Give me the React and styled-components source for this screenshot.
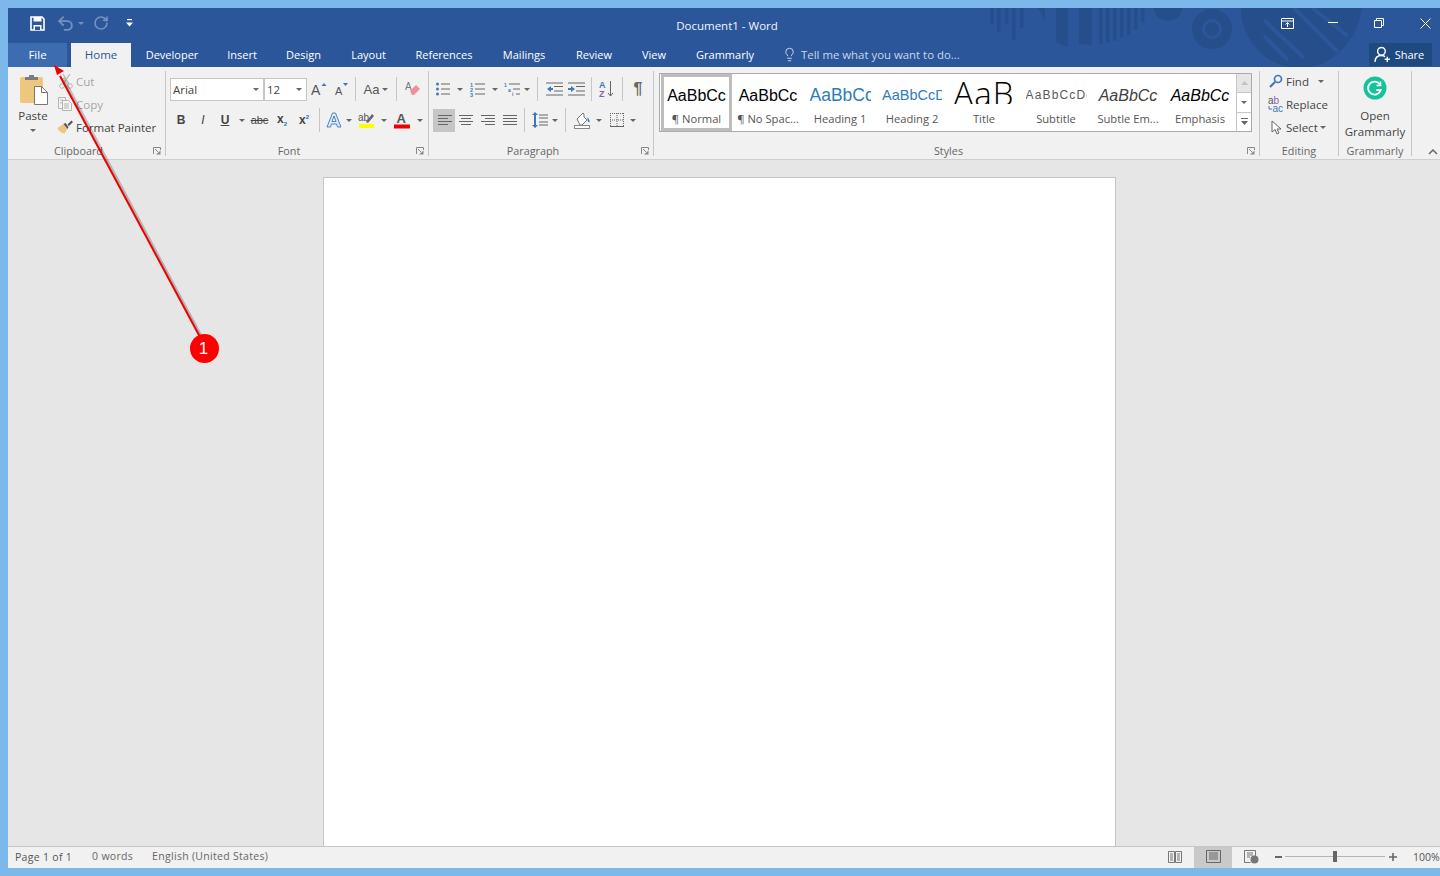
import React from 'react';
import styled, { createGlobalStyle } from 'styled-components';
import { Undo2, RotateCw, Lightbulb } from 'lucide-react';

const Global = createGlobalStyle`
  html, body { margin: 0; padding: 0; height: 876px; overflow: hidden; background: #7cb8ea; }
  * { box-sizing: border-box; }
`;
const UI = '"Open Sans", "Noto Sans", sans-serif';
const Page = styled.div`
  position: relative; width: 1440px; height: 876px; padding: 8px 0 8px 8px;
  background: #7cb8ea; font-family: ${UI}; font-size: 11.5px; color: #444; overflow: hidden;
`;
const Window = styled.div`display: flex; flex-direction: column; height: 860px; background: #e6e6e6;`;
const Head = styled.div`position: relative; background: #2b579a; flex: none;`;
const Art = styled.svg`position: absolute; left: 0; top: 0; display: block;`;
const TitleBar = styled.div`
  position: relative; display: grid; grid-template-columns: 1fr auto 1fr; align-items: start; height: 35px; color: #fff;
`;
const Qat = styled.div`display: flex; align-items: center; padding-left: 18px; height: 30px;`;
const QatBtn = styled.div`
  width: ${p => p.$w}px; height: 22px; display: flex; align-items: center; justify-content: center;
  margin-left: ${p => p.$ml || 0}px; opacity: ${p => p.$dim ? 0.35 : 1}; color: #fff;
`;
const Title = styled.div`font-size: 11.5px; line-height: 35px; padding-left: 6px; color: #f2f5fa;`;
const Controls = styled.div`display: flex; justify-content: flex-end; height: 30px;`;
const Ctrl = styled.div`
  width: ${p => p.$last ? 38 : 46}px; padding-left: ${p => p.$last ? 8 : 0}px;
  display: flex; align-items: center; justify-content: center;
`;
const TabRow = styled.div`position: relative; display: flex; height: 24px; align-items: stretch;`;
const Tab = styled.div`
  width: ${p => p.$w}px; flex: none; display: flex; align-items: center; justify-content: center; padding-bottom: 2px;
  color: #fff; font-size: 11px; margin-left: ${p => p.$ml || 0}px;
  ${p => p.$file && 'background:#3d6cb1;font-size:11.5px;'}
  ${p => p.$active && 'background:#f1f1f1;color:#2b579a;font-size:11.5px;'}
`;
const Tell = styled.div`display: flex; align-items: center; gap: 4px; margin-left: 13px; padding-bottom: 2px; color: #c9d6e8; font-size: 11.4px;`;
const Share = styled.div`
  margin-left: auto; margin-right: 8px; width: 63px; height: 23px; background: #1e4a7f; color: #fff;
  display: flex; align-items: center; justify-content: center; gap: 4px; font-size: 11px; padding-right: 3px;
`;
const Ribbon = styled.div`
  flex: none; display: flex; height: 93px; padding: 4px 0 3px; background: #f1f1f1; border-bottom: 1px solid #cfcfcf;
`;
const Group = styled.div`
  width: ${p => p.$w}px; flex: none; display: flex; flex-direction: column; border-right: 1px solid #c6c6c6;
`;
const GroupBody = styled.div`
  flex: 1; display: flex; min-height: 0; padding: ${p => p.$pt ?? 0}px 0 0 ${p => p.$pl ?? 0}px;
  flex-direction: ${p => p.$col ? 'column' : 'row'}; gap: ${p => p.$gap || 0}px;
`;
const GroupFoot = styled.div`display: flex; align-items: center; height: 14px; margin-bottom: -2px; flex: none;`;
const GroupLabel = styled.div`flex: 1; text-align: center; color: #666; font-size: 10.8px; line-height: 14px;`;
const Launcher = styled.div`width: 16px; flex: none; display: flex; justify-content: center;`;
const PasteCol = styled.div`width: 50px; flex: none; display: flex; flex-direction: column; align-items: center; padding-top: 3px;`;
const PasteText = styled.div`margin-top: 3px; line-height: 16px;`;
const SmallCol = styled.div`display: flex; flex-direction: column; gap: 3px;`;
const SmallRow = styled.div`
  height: 20px; display: flex; align-items: center; color: ${p => p.$off ? '#a6a6a6' : '#444'}; white-space: nowrap;
`;
const SmallIcon = styled.div`width: 18px; flex: none; display: flex; justify-content: center; margin-right: ${p => p.$mr ?? 0}px;`;
const Row = styled.div`display: flex; align-items: center; height: 26px; padding-left: ${p => p.$pl || 0}px;`;
const Select = styled.div`
  width: ${p => p.$w}px; height: 23px; background: #fff; border: 1px solid #c6c6c6; display: flex; align-items: center;
  justify-content: space-between; padding: 0 4px 0 2px; font-size: 11.5px; color: #444;
`;
const Btn = styled.div`
  width: ${p => p.$w || 22}px; height: 23px; flex: none; display: flex; align-items: center; justify-content: center;
  ${p => p.$on && 'background:#c6c6c6;'}
`;
const Glyph = styled.span`
  font-family: "Liberation Sans", sans-serif; font-size: ${p => p.$s || 12}px; line-height: 1; color: ${p => p.$c || '#444'};
  font-weight: ${p => p.$b ? 700 : 400}; font-style: ${p => p.$i ? 'italic' : 'normal'};
  text-decoration: ${p => p.$u ? 'underline' : p.$x ? 'line-through' : 'none'};
`;
const Sub = styled.span`font-size: 6px; color: #2b6cb0; vertical-align: ${p => p.$up ? 'super' : 'sub'};`;
const Sep = styled.div`width: 1px; height: 24px; background: #c6c6c6; flex: none; margin: 0 ${p => p.$m ?? 0}px;`;
const Caret = styled.span`
  display: inline-block; width: 0; height: 0; border-left: 3px solid transparent; border-right: 3px solid transparent;
  border-top: 3px solid #666; flex: none;
`;
const Gallery = styled.div`
  display: flex; width: 593px; height: 59px; background: #fff; border: 1px solid #ababab; padding-left: 1px; margin-left: 5px;
`;
const StyleItem = styled.div`
  width: 72px; flex: none; display: flex; flex-direction: column; align-items: center; overflow: hidden; height: 57px;
  ${p => p.$on ? 'border: 3px solid #bdbdbd; padding-top: 8px;' : 'padding-top: 11px;'}
`;
const Preview = styled.div`
  height: 23px; width: 61px; line-height: 21px; text-align: center; overflow: hidden; white-space: nowrap; flex: none;
  font-family: "Liberation Sans", sans-serif; font-size: ${p => p.$s || 16}px; color: ${p => p.$c || '#000'};
  font-style: ${p => p.$i ? 'italic' : 'normal'}; letter-spacing: ${p => p.$ls || 0}px;
`;
const TitlePreview = styled(Preview)`
  width: 64px; height: 23px; margin-top: -4px; margin-bottom: 4px; line-height: 26px; font-family: "Open Sans", sans-serif; font-weight: 300;
  letter-spacing: 1px; display: flex; justify-content: center; align-items: flex-start;
`;
const StyleName = styled.div`font-size: 11.2px; line-height: 14px; margin-top: 4px; color: #555; white-space: nowrap;`;
const Scroll = styled.div`width: 15px; flex: none; margin-left: auto; display: flex; flex-direction: column;`;
const ScrollBtn = styled.div`
  flex: 1; display: flex; align-items: center; justify-content: center; border-left: 1px solid #c6c6c6;
  border-top: ${p => p.$first ? 'none' : '1px solid #c6c6c6'}; background: ${p => p.$off ? '#e6e6e6' : '#fff'};
`;
const EditRow = styled(SmallRow)``;
const OpenCol = styled.div`display: flex; flex-direction: column; align-items: center; width: 100%; padding-top: 5px;`;
const OpenText = styled.div`margin-top: 8px; line-height: 16px; text-align: center;`;
const Collapse = styled.div`flex: 1; display: flex; align-items: flex-end; justify-content: flex-end; padding: 0 2px 1px 0;`;
const DocArea = styled.div`flex: 1; min-height: 0; display: flex; justify-content: center; padding-top: 17px; overflow: hidden;`;
const Paper = styled.div`width: 793px; height: 900px; margin-right: 10px; background: #fff; border: 1px solid #c6c6c6;`;
const Status = styled.div`
  flex: none; height: 22px; background: #f1f1f1; border-top: 1px solid #c6c6c6; display: flex; align-items: stretch;
  font-size: 10.5px; letter-spacing: .3px; color: #555;
`;
const StatusText = styled.div`
  display: flex; align-items: center; margin-left: ${p => p.$ml}px; padding-bottom: ${p => p.$pb ?? 3}px;
  color: ${p => p.$c || '#666'}; white-space: nowrap;
`;
const StatusRight = styled.div`margin-left: auto; display: flex; align-items: stretch;`;
const ViewBtn = styled.div`
  width: 38px; display: flex; align-items: center; justify-content: center; padding-bottom: 2px; ${p => p.$on && 'background:#c9c9c9;'}
`;
const ZoomBar = styled.div`display: flex; align-items: center; padding: 0 0 2px 5px;`;
const Slider = styled.div`position: relative; width: 100px; height: 1px; background: #b4b4b4; margin: 0 4px 0 3px;`;
const Thumb = styled.div`position: absolute; left: 48px; top: -5px; width: 4px; height: 11px; background: #666;`;
const ZoomPct = styled.div`margin-left: 16px; width: 27px; font-size: 10.5px; letter-spacing: 0; white-space: nowrap;`;
const Marker = styled.svg`position: absolute; left: 0; top: 0; pointer-events: none;`;
const Badge = styled.div`
  position: absolute; left: 190px; top: 334px; width: 29px; height: 29px; border-radius: 50%; background: #fe0000; color: #fff;
  display: flex; align-items: center; justify-content: center; font-family: "Liberation Sans", sans-serif; font-size: 17px; padding-right: 2px;
`;
const Ico = styled.svg`display: block; flex: none; overflow: visible;`;

const G = '#666';
const B = '#3f78b5';
const Launch = () => (
  <Ico width="8" height="8" viewBox="0 0 8 8"><path d="M.5 7V.5H7.5V3M2 2l3 3" fill="none" stroke="#888" /><path d="M3 7.5h4.5V3.5z" fill="#888" /></Ico>
);
const Lines = ({ w = 16, rows }) => (
  <Ico width={w} height="14" viewBox={`0 0 ${w} 14`}>
    {rows.map(([x, y, l], i) => <rect key={i} x={x} y={y} width={l} height="1" fill={G} />)}
  </Ico>
);
const artStripes = [[982, 16], [989, 24], [997, 16], [1004, 32], [1012, 20], [1091, 36], [1098, 35], [1105, 33], [1112, 30], [1119, 27], [1126, 22], [1133, 14]];

export default function App() {
  return (
    <Page>
      <Global />
      <Window>
        <Head>
          <Art width="1432" height="59" viewBox="0 0 1432 59" fill="#254e8b">
            {artStripes.map(([x, h]) => <rect key={x} x={x} y="0" width="3.5" height={h} />)}
            <path d="M1030 0h7v13zM1048 0h12v39l-12-5zM1071 0h13v37l-13-1z" />
            <path d="M1146 0h28a14 13 0 0 1-28 0z" />
            <circle cx="1204" cy="21" r="15" fill="none" stroke="#254e8b" strokeWidth="10" />
            <circle cx="1204" cy="21" r="7" />
            <path d="M1233 0h121c-4 30-28 60-62 60-36 0-59-30-59-60z" />
            <path d="M1256 12l40 38M1256 28l24 24M1286 0l44 44M1304 0l36 28" stroke="#2b579a" strokeWidth="4" fill="none" />
          </Art>
          <TitleBar>
            <Qat>
              <QatBtn $w={22}>
                <Ico width="15" height="15" viewBox="0 0 15 15"><path d="M1 1h11l2 2v11H1z" fill="none" stroke="#fff" strokeWidth="1.6" /><rect x="3.5" y="1" width="8" height="4.5" fill="#fff" /><rect x="3.5" y="9" width="8" height="5" fill="#fff" /><rect x="5" y="10.5" width="5" height="3.5" fill="#2b579a" /></Ico>
              </QatBtn>
              <QatBtn $w={22} $ml={6} $dim><Undo2 size={19} strokeWidth={2.4} /></QatBtn>
              <QatBtn $w={9} $dim><Caret style={{ borderTopColor: '#fff' }} /></QatBtn>
              <QatBtn $w={32} $dim><RotateCw size={16} strokeWidth={2.4} /></QatBtn>
              <QatBtn $w={24}>
                <Ico width="7" height="8" viewBox="0 0 7 8"><rect x="1" y="0" width="5" height="1.2" fill="#fff" /><path d="M0 3.5h7L3.5 7.5z" fill="#fff" /></Ico>
              </QatBtn>
            </Qat>
            <Title>Document1 - Word</Title>
            <Controls>
              <Ctrl><Ico width="13" height="11" viewBox="0 0 13 11"><path d="M.5.5h12v10H.5zM.5 3h12M6.5 9V5M4.5 6.5l2-2 2 2" fill="none" stroke="#fff" /></Ico></Ctrl>
              <Ctrl><Ico width="10" height="2" viewBox="0 0 10 2"><rect width="10" height="1" fill="#fff" /></Ico></Ctrl>
              <Ctrl><Ico width="10" height="10" viewBox="0 0 10 10"><path d="M.5 2.5h7v7h-7zM2.5 2.5v-2h7v7h-2" fill="none" stroke="#fff" /></Ico></Ctrl>
              <Ctrl $last><Ico width="11" height="11" viewBox="0 0 11 11"><path d="M.5.5l10 10M10.5.5l-10 10" stroke="#fff" /></Ico></Ctrl>
            </Controls>
          </TitleBar>
          <TabRow>
            <Tab $w={59} $file>File</Tab>
            <Tab $w={60} $ml={4} $active>Home</Tab>
            <Tab $w={82}>Developer</Tab>
            <Tab $w={58}>Insert</Tab>
            <Tab $w={65}>Design</Tab>
            <Tab $w={65}>Layout</Tab>
            <Tab $w={86}>References</Tab>
            <Tab $w={74}>Mailings</Tab>
            <Tab $w={66}>Review</Tab>
            <Tab $w={54}>View</Tab>
            <Tab $w={88}>Grammarly</Tab>
            <Tell><Lightbulb size={15} strokeWidth={1.3} color="#e6edf6" />Tell me what you want to do...</Tell>
            <Share>
              <Ico width="17" height="17" viewBox="0 0 16 16"><circle cx="7" cy="5" r="3.6" fill="none" stroke="#fff" strokeWidth="1.3" /><path d="M1 15c0-4 2.500-6 6-6 1.500 0 2.500.4 3.500 1M12.500 10v5M10 12.500h5" fill="none" stroke="#fff" strokeWidth="1.3" /></Ico>
              Share
            </Share>
          </TabRow>
        </Head>
        <Ribbon>
          <Group $w={158}>
            <GroupBody>
              <PasteCol>
                <Ico width="29" height="31" viewBox="0 0 29 31">
                  <path d="M1 5a2 2 0 0 1 2-2h19a2 2 0 0 1 2 2v24H3a2 2 0 0 1-2-2z" fill="#eec77e" />
                  <path d="M6 6V3h4V1h5v2h4v3z" fill="#7c7c7c" />
                  <path d="M15.500 12.500h7l6 6v12h-13z" fill="#fff" stroke="#777" />
                  <path d="M22.500 12.500v6h6" fill="none" stroke="#777" />
                </Ico>
                <PasteText>Paste</PasteText>
                <Caret style={{ marginTop: 5 }} />
              </PasteCol>
              <SmallCol>
                <SmallRow $off>
                  <SmallIcon><Ico width="16" height="16" viewBox="0 0 16 16"><circle cx="3" cy="13" r="2.300" fill="none" stroke="#b5b5b5" /><circle cx="11" cy="13" r="2.300" fill="none" stroke="#b5b5b5" /><path d="M4 11L11 1M10 11L4 1" stroke="#b5b5b5" strokeWidth="1.2" /></Ico></SmallIcon>Cut
                </SmallRow>
                <SmallRow $off>
                  <SmallIcon><Ico width="16" height="16" viewBox="0 0 16 16" style={{ marginLeft: -2 }}><path d="M.5 1.500h7v3h-3v8h-4zM4.500 4.500h6l3 3v7h-9zM2 4h3M2 7h2M6 8h5M6 10h5M6 12h5" fill="#f4f4f4" stroke="#b5b5b5" /></Ico></SmallIcon>Copy
                </SmallRow>
                <SmallRow>
                  <SmallIcon><Ico width="17" height="14" viewBox="0 0 16 14" style={{ marginLeft: -3 }}><path d="M0 8l6-4 4 5-3 4.500C4.500 13.500 1 11 0 8z" fill="#eec77e" /><path d="M6 4l2-1 3 4-1 2zM10 4.500l4-4 1.500 1.500-4 4z" fill="#555" /></Ico></SmallIcon>Format Painter
                </SmallRow>
              </SmallCol>
            </GroupBody>
            <GroupFoot><GroupLabel>Clipboard</GroupLabel><Launcher><Launch /></Launcher></GroupFoot>
          </Group>

          <Group $w={263}>
            <GroupBody $col $pt={5} $gap={5} $pl={4}>
              <Row>
                <Select $w={94}><span>Arial</span><Caret /></Select>
                <Select $w={43}><span>12</span><Caret /></Select>
                <Btn $w={22} style={{ marginLeft: 1 }}>
                  <Ico width="16" height="14" viewBox="0 0 16 14"><text x="0" y="13" fontFamily="Liberation Sans" fontSize="14" fill="#555">A</text><path d="M10.500 4L13 1l2.500 3z" fill={B} /></Ico>
                </Btn>
                <Btn $w={22}>
                  <Ico width="15" height="14" viewBox="0 0 15 14"><text x="1" y="13" fontFamily="Liberation Sans" fontSize="11" fill="#555">A</text><path d="M9 1h5l-2.500 3z" fill={B} /></Ico>
                </Btn>
                <Sep $m={3} />
                <Btn $w={34} style={{ gap: 3 }}><Glyph $s={13} $c="#555">Aa</Glyph><Caret /></Btn>
                <Sep $m={3} />
                <Btn $w={25}>
                  <Ico width="16" height="16" viewBox="0 0 16 16"><text x="0" y="9" fontFamily="Liberation Sans" fontSize="10" fill="#777">A</text><path d="M5 10l6-6 4 4-6 6H7z" fill="#ee8f9a" /></Ico>
                </Btn>
              </Row>
              <Row>
                <Btn><Glyph $b $s={12}>B</Glyph></Btn>
                <Btn><Glyph $i $s={12}>I</Glyph></Btn>
                <Btn><Glyph $b $u $s={12}>U</Glyph></Btn>
                <Btn $w={12}><Caret /></Btn>
                <Btn $w={23}><Glyph $x $s={11}>abc</Glyph></Btn>
                <Btn><Glyph $b $s={12}>x<Sub>2</Sub></Glyph></Btn>
                <Btn><Glyph $b $s={12}>x<Sub $up>2</Sub></Glyph></Btn>
                <Sep $m={4} />
                <Btn $w={22} style={{ marginLeft: -1 }}>
                  <Ico width="16" height="16" viewBox="0 0 16 16"><path d="M1 15L6.500 1h3L15 15h-3.500l-1-3h-5l-1 3zM6 9.500h4L8 4z" fill="#dce8f5" stroke="#4a86c5" /></Ico>
                </Btn>
                <Btn $w={7}><Caret /></Btn>
                <Btn $w={29}>
                  <Ico width="17" height="16" viewBox="0 0 17 16"><text x="0" y="9" fontFamily="Liberation Sans" fontSize="10" fill="#555">ab</text><path d="M8 10l6-8 2 2-6 7z" fill="#666" /><rect x="1" y="12" width="15" height="4" fill="#ffff00" /></Ico>
                </Btn>
                <Btn $w={6}><Caret /></Btn>
                <Btn $w={30}>
                  <Ico width="16" height="17" viewBox="0 0 16 17"><text x="2.500" y="11" fontFamily="Liberation Sans" fontSize="13" fontWeight="700" fill="#555">A</text><rect y="12.500" width="16" height="4" fill="#f00000" /></Ico>
                </Btn>
                <Btn $w={5}><Caret /></Btn>
              </Row>
            </GroupBody>
            <GroupFoot><GroupLabel>Font</GroupLabel><Launcher><Launch /></Launcher></GroupFoot>
          </Group>

          <Group $w={225}>
            <GroupBody $col $pt={5} $gap={5} $pl={3}>
              <Row>
                <Btn>
                  <Ico width="14" height="14" viewBox="0 0 14 14"><circle cx="1.500" cy="2" r="1.500" fill={B} /><circle cx="1.500" cy="7" r="1.500" fill={B} /><circle cx="1.500" cy="12" r="1.500" fill={B} /><path d="M5 2h9M5 7h9M5 12h9" stroke={G} /></Ico>
                </Btn>
                <Btn $w={12}><Caret /></Btn>
                <Btn $w={23}>
                  <Ico width="15" height="14" viewBox="0 0 15 14"><g fontFamily="Liberation Sans" fontSize="5.500" fontWeight="700" fill={B}><text x="0" y="5">1</text><text x="0" y="10">2</text><text x="0" y="14.500">3</text></g><path d="M5 2h10M5 7h10M5 12h10" stroke={G} /></Ico>
                </Btn>
                <Btn $w={12}><Caret /></Btn>
                <Btn $w={21}>
                  <Ico width="16" height="14" viewBox="0 0 16 14"><g fontFamily="Liberation Sans" fontSize="5" fontWeight="700" fill={B}><text x="0" y="5">1</text><text x="4" y="9.500">a</text><text x="8" y="14">i</text></g><path d="M5 2h11M9 7h7M12 12h4" stroke={G} /></Ico>
                </Btn>
                <Btn $w={10}><Caret /></Btn>
                <Sep $m={5} />
                <Btn $w={22}>
                  <Ico width="17" height="14" viewBox="0 0 17 14"><path d="M0 1h17M8 4.500h9M8 9h9M0 13h17" stroke={G} /><path d="M1 7l4-3v2h2v2H5v2z" fill={B} /></Ico>
                </Btn>
                <Btn $w={22}>
                  <Ico width="17" height="14" viewBox="0 0 17 14"><path d="M0 1h17M8 4.500h9M8 9h9M0 13h17" stroke={G} /><path d="M7 7L3 4v2H0v2h3v2z" fill={B} /></Ico>
                </Btn>
                <Sep $m={4} />
                <Btn $w={22}>
                  <Ico width="16" height="18" viewBox="0 0 16 18"><g fontFamily="Liberation Sans" fontSize="9" fontWeight="700"><text x="0" y="8" fill={B}>A</text><text x="0" y="17" fill="#8a5fb0">Z</text></g><path d="M11.500 1v15M9 13l2.500 3 2.500-3" fill="none" stroke={G} /></Ico>
                </Btn>
                <Sep $m={4} />
                <Btn $w={22}><Glyph $b $s={16} $c="#666">¶</Glyph></Btn>
              </Row>
              <Row $pl={1}>
                <Btn $on><Lines rows={[[2, 2, 14], [2, 5, 10], [2, 8, 14], [2, 11, 10]]} /></Btn>
                <Btn><Lines rows={[[1, 2, 14], [3, 5, 10], [1, 8, 14], [3, 11, 10]]} /></Btn>
                <Btn><Lines rows={[[1, 2, 14], [5, 5, 10], [1, 8, 14], [5, 11, 10]]} /></Btn>
                <Btn><Lines rows={[[1, 2, 14], [1, 5, 14], [1, 8, 14], [1, 11, 14]]} /></Btn>
                <Sep $m={3} />
                <Btn $w={23}>
                  <Ico width="16" height="16" viewBox="0 0 16 16"><path d="M7 3h9M7 6h9M7 10h9M7 13h9" stroke={G} /><path d="M3 0l3 3H4v10h2l-3 3-3-3h2V3H0z" fill={B} /></Ico>
                </Btn>
                <Btn $w={8}><Caret /></Btn>
                <Sep $m={6} />
                <Btn $w={21}>
                  <Ico width="17" height="17" viewBox="0 0 17 17"><path d="M3 7l5-5 1-1 1 1v3l3 3-5 5H6z" fill="#fff" stroke="#777" /><path d="M13.500 5c1.500 2 2.500 4 2 5-1 1-2.500-1-2-5z" fill={B} /><rect x="0.500" y="13.500" width="15" height="3" fill="#fff" stroke="#888" /></Ico>
                </Btn>
                <Btn $w={11}><Caret /></Btn>
                <Btn $w={25}>
                  <Ico width="14" height="14" viewBox="0 0 14 14"><path d="M0 .5h14M.5 0v14M13.500 0v14M0 7h14M7 0v14" stroke={G} strokeDasharray="1 1" fill="none" /><path d="M0 13.500h14" stroke={G} /></Ico>
                </Btn>
                <Btn $w={7}><Caret /></Btn>
              </Row>
            </GroupBody>
            <GroupFoot><GroupLabel>Paragraph</GroupLabel><Launcher><Launch /></Launcher></GroupFoot>
          </Group>

          <Group $w={606}>
            <GroupBody $pt={2}>
              <Gallery>
                <StyleItem $on style={{ width: 71 }}><Preview style={{ width: 60 }}>AaBbCc</Preview><StyleName>¶ Normal</StyleName></StyleItem>
                <StyleItem><Preview>AaBbCc</Preview><StyleName>¶ No Spac...</StyleName></StyleItem>
                <StyleItem><Preview $s={17.500} $c="#2e7cc0" style={{ textAlign: 'left' }}>AaBbCcDd</Preview><StyleName>Heading 1</StyleName></StyleItem>
                <StyleItem><Preview $s={14.500} $c="#2e7cc0" style={{ width: 60, textAlign: 'left' }}>AaBbCcDd</Preview><StyleName>Heading 2</StyleName></StyleItem>
                <StyleItem><TitlePreview $s={33}>AaB</TitlePreview><StyleName>Title</StyleName></StyleItem>
                <StyleItem><Preview $s={12} $c="#595959" $ls={1.150} style={{ textAlign: 'left' }}>AaBbCcDd</Preview><StyleName>Subtitle</StyleName></StyleItem>
                <StyleItem><Preview $i $c="#404040">AaBbCc</Preview><StyleName>Subtle Em...</StyleName></StyleItem>
                <StyleItem><Preview $i>AaBbCc</Preview><StyleName>Emphasis</StyleName></StyleItem>
                <Scroll>
                  <ScrollBtn $first $off><Ico width="7" height="4" viewBox="0 0 7 4"><path d="M0 4l3.500-4L7 4z" fill="#c2c2c2" /></Ico></ScrollBtn>
                  <ScrollBtn><Caret /></ScrollBtn>
                  <ScrollBtn><Ico width="7" height="7" viewBox="0 0 7 7"><rect width="7" height="1" fill="#666" /><path d="M0 3h7L3.500 7z" fill="#666" /></Ico></ScrollBtn>
                </Scroll>
              </Gallery>
            </GroupBody>
            <GroupFoot><GroupLabel>Styles</GroupLabel><Launcher><Launch /></Launcher></GroupFoot>
          </Group>

          <Group $w={79}>
            <GroupBody $pl={7}>
              <SmallCol>
                <EditRow>
                  <SmallIcon $mr={1}><Ico width="14" height="14" viewBox="0 0 14 14"><circle cx="9" cy="5" r="3.500" fill="none" stroke={B} strokeWidth="1.700" /><path d="M6 8l-5 5" stroke={B} strokeWidth="2.200" /></Ico></SmallIcon>
                  Find<Caret style={{ marginLeft: 9 }} />
                </EditRow>
                <EditRow>
                  <SmallIcon $mr={1}><Ico width="16" height="16" viewBox="0 0 16 16"><g fontFamily="Liberation Sans" fontSize="10"><text x="0" y="8" fill="#555">a</text><text x="5.500" y="8" fill="#8a5fb0">b</text><text x="4.500" y="15.500" fill={B}>ac</text></g><path d="M1 10v3h3" stroke={B} fill="none" /></Ico></SmallIcon>
                  Replace
                </EditRow>
                <EditRow>
                  <SmallIcon $mr={1}><Ico width="11" height="15" viewBox="0 0 11 15"><path d="M1 1v11l3-2.500L6 14l2-1-2-4h4z" fill="#fff" stroke="#666" /></Ico></SmallIcon>
                  Select<Caret style={{ marginLeft: 2 }} />
                </EditRow>
              </SmallCol>
            </GroupBody>
            <GroupFoot><GroupLabel>Editing</GroupLabel></GroupFoot>
          </Group>

          <Group $w={73}>
            <GroupBody>
              <OpenCol>
                <Ico width="24" height="24" viewBox="0 0 24 24"><circle cx="12" cy="12" r="11.500" fill="#15c39a" /><path d="M17 8.500a6.500 6.500 0 1 0 .8 5.500h-4.500" fill="none" stroke="#fff" strokeWidth="1.800" /><path d="M17.500 5.500v4h-4" fill="none" stroke="#fff" strokeWidth="1.500" /></Ico>
                <OpenText>Open<br />Grammarly</OpenText>
              </OpenCol>
            </GroupBody>
            <GroupFoot><GroupLabel>Grammarly</GroupLabel></GroupFoot>
          </Group>
          <Collapse><Ico width="10" height="6" viewBox="0 0 10 6"><path d="M1 5l4-4 4 4" fill="none" stroke="#666" strokeWidth="1.500" /></Ico></Collapse>
        </Ribbon>
        <DocArea><Paper /></DocArea>
        <Status>
          <StatusText $ml={7} $pb={2} $c="#555">Page 1 of 1</StatusText>
          <StatusText $ml={20}>0 words</StatusText>
          <StatusText $ml={19}>English (United States)</StatusText>
          <StatusRight>
            <ViewBtn>
              <Ico width="14" height="13" viewBox="0 0 14 13"><path d="M.5 1.500h6v11h-6zM7.500 1.500h6v11h-6zM2 4h3M2 6h3M2 8h3M2 10h3M9 4h3M9 6h3M9 8h3M9 10h3" fill="none" stroke="#777" /></Ico>
            </ViewBtn>
            <ViewBtn $on>
              <Ico width="15" height="13" viewBox="0 0 15 13"><path d="M.5.500h14v12H.5zM3 3h9M3 5h9M3 7h9M3 9h9" fill="none" stroke="#666" /></Ico>
            </ViewBtn>
            <ViewBtn>
              <Ico width="15" height="14" viewBox="0 0 15 14"><path d="M.5.500h11v8M.5.500v12h6M3 3h6M3 5h6M3 7h3" fill="none" stroke="#777" /><circle cx="10.500" cy="9.500" r="4" fill="#777" /></Ico>
            </ViewBtn>
            <ZoomBar>
              <Ico width="7" height="2" viewBox="0 0 7 2"><rect width="7" height="2" fill="#666" /></Ico>
              <Slider><Thumb /></Slider>
              <Ico width="8" height="8" viewBox="0 0 8 8"><path d="M0 4h8M4 0v8" stroke="#666" strokeWidth="1.600" /></Ico>
              <ZoomPct>100%</ZoomPct>
            </ZoomBar>
          </StatusRight>
        </Status>
      </Window>
      <Marker width="1440" height="876" viewBox="0 0 1440 876">
        <path d="M200 337L61 77" stroke="#000" strokeOpacity=".22" strokeWidth="3" transform="translate(2 1)" />
        <path d="M200 337L60 76" stroke="#f00000" strokeWidth="2" />
        <path d="M54 65l10 6-7 4z" fill="#f00000" />
      </Marker>
      <Badge>1</Badge>
    </Page>
  );
}
